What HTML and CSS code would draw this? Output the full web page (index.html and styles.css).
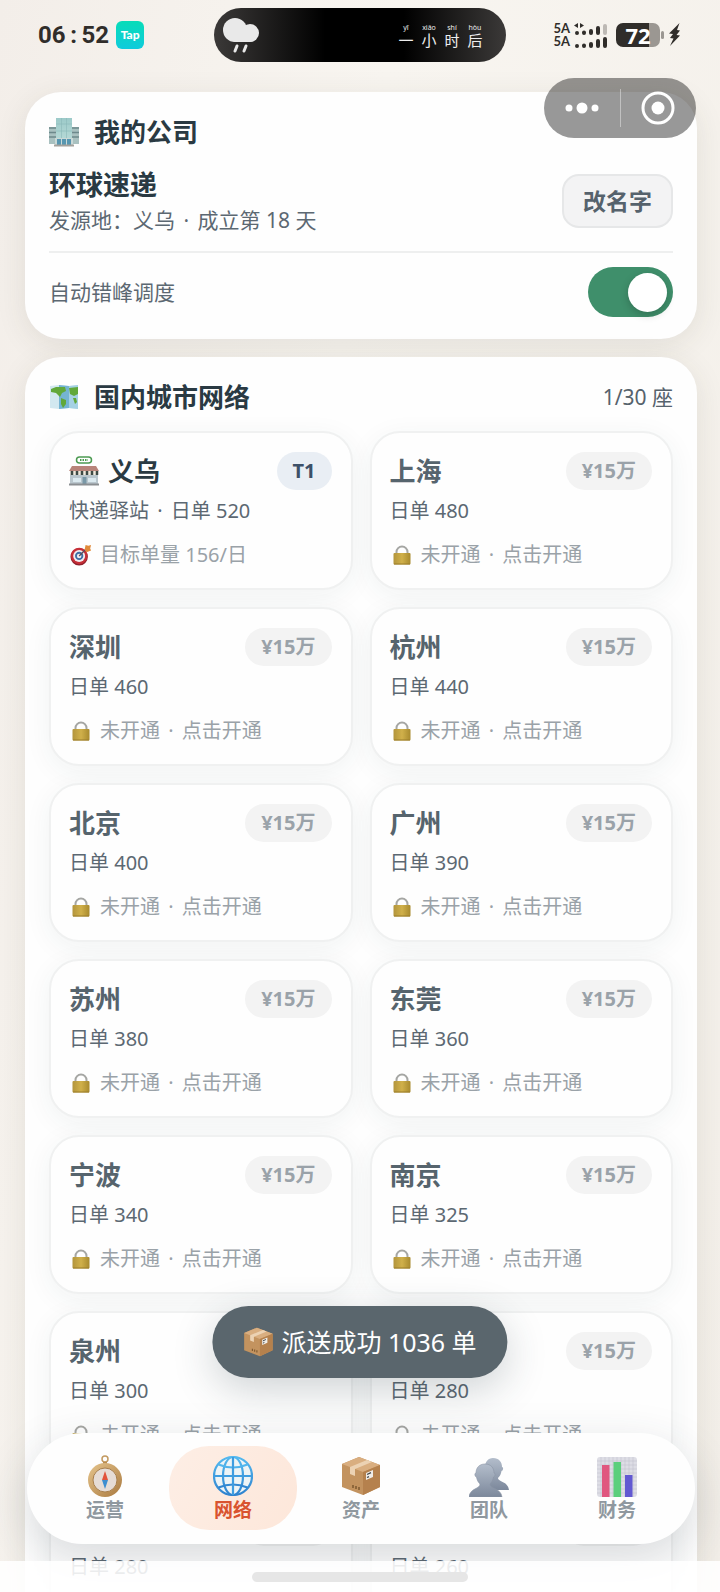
FILE: index.html
```html
<!DOCTYPE html>
<html lang="zh-CN">
<head>
<meta charset="utf-8">
<meta name="viewport" content="width=device-width, initial-scale=1">
<title>环球速递</title>
<link rel="stylesheet" href="styles.css">
</head>
<body>
<svg class="sprite" aria-hidden="true">
  <defs>
    <linearGradient id="gold" x1="0" x2="1"><stop offset="0" stop-color="#b3953c"/><stop offset=".5" stop-color="#d0b04a"/><stop offset="1" stop-color="#a88a2e"/></linearGradient>
    <linearGradient id="brass" x1="0" y1="0" x2="1" y2="1"><stop offset="0" stop-color="#e6c58d"/><stop offset="1" stop-color="#a9793f"/></linearGradient>
    <linearGradient id="sky" x1="0" y1="0" x2="0" y2="1"><stop offset="0" stop-color="#54b9ef"/><stop offset="1" stop-color="#2f83cf"/></linearGradient>
    <linearGradient id="slate" x1="0" y1="0" x2="0" y2="1"><stop offset="0" stop-color="#b3bdcb"/><stop offset="1" stop-color="#7c889b"/></linearGradient>
    <linearGradient id="glass" x1="0" y1="0" x2="0" y2="1"><stop offset="0" stop-color="#9ccac9"/><stop offset="1" stop-color="#b4d8d5"/></linearGradient>
  </defs>
  <symbol id="lock" viewBox="-2 -1 24 22">
    <path d="M4.500 9V7a5.500 5.500 0 0 1 11 0v2" fill="none" stroke="#a5a6a3" stroke-width="2"/>
    <rect x="1.500" y="8" width="17" height="11.500" rx="1" fill="url(#gold)"/>
    <path d="M2 19h16" stroke="#9a7d2a"/>
  </symbol>
  <symbol id="box" viewBox="0 0 40 40">
    <path d="M1 8 18 1l21 8v22L22 39 1 31z" fill="#c3935f"/>
    <path d="M1 8 18 1l21 8-17 7z" fill="#d9ae80"/>
    <path d="M22 16 39 9v22l-17 8z" fill="#b5814d"/>
    <path d="m9 11 17-7 5 2-17 7v7l-5-2z" fill="#ecd2b3"/>
    <path d="m25 17 7-3v7l-7 3z" fill="#f0ede8"/>
    <path d="m26 18.500 4-1.800M26 21.500l2-.9" stroke="#41464b" stroke-width="1.300"/>
    <path d="m12 32 0-3m3 4v-3m3 4v-3" stroke="#7d5930" stroke-width="1.500"/>
  </symbol>
</svg>

<div class="screen">
  <header class="status">
    <div class="clock"><time datetime="06:52"><span>06</span><span class="colon">:</span><span>52</span></time><span class="tap">Tap</span></div>
    <div class="island">
      <svg class="weather" viewBox="0 0 38 36" aria-hidden="true">
        <g fill="#e9e9e9"><circle cx="13" cy="13" r="12"/><circle cx="28" cy="16" r="9"/><rect x="8" y="12" width="26" height="13" rx="6"/></g>
        <path d="m15 29-2 5m11-5-2 5" stroke="#e9e9e9" stroke-width="3" stroke-linecap="round"/>
      </svg>
      <div class="lyric"><span><small>yī</small>一</span><span><small>xiǎo</small>小</span><span><small>shí</small>时</span><span><small>hòu</small>后</span></div>
    </div>
    <div class="device">
      <div class="signals">
        <div class="signal"><span>5A</span><svg viewBox="0 0 34 12" aria-hidden="true"><g stroke="#302d2a" stroke-width="4" stroke-linecap="round"><path d="M4 10h0M11 9.500v.5M18 8v2M25 5v5"/><path d="M32 3v7" stroke="#bdb9b4"/></g><path d="m5 0-4 2.500L5 5zM7 0l4 2.500L7 5z" fill="#302d2a"/></svg></div>
        <div class="signal"><span>5A</span><svg viewBox="0 0 34 12" aria-hidden="true"><g stroke="#302d2a" stroke-width="4" stroke-linecap="round"><path d="M4 10h0M11 9.500v.5M18 8v2M25 5v5M32 3v7"/></g></svg></div>
      </div>
      <div class="battery">72</div>
      <svg class="bolt" viewBox="0 0 12 24" aria-hidden="true"><path d="M10.500 0 0 10.500l4 .5-3 4 3.500.5L1 23 11 12.500 7.500 12l3.500-4.500-3-.5z" fill="#302d2a"/></svg>
    </div>
  </header>

  <div class="capsule">
    <button type="button" aria-label="更多"><svg viewBox="0 0 34 12" aria-hidden="true"><g fill="#fff"><circle cx="4" cy="6" r="3.500"/><circle cx="17" cy="6" r="5.500"/><circle cx="30" cy="6" r="3.500"/></g></svg></button>
    <button type="button" aria-label="关闭"><svg viewBox="0 0 34 34" aria-hidden="true"><circle cx="17" cy="17" r="15" fill="none" stroke="#fff" stroke-width="3"/><circle cx="17" cy="17" r="6.500" fill="#fff"/></svg></button>
  </div>

  <main class="content">
    <section class="panel">
      <div class="panel-head">
        <svg class="head-icon" viewBox="0 0 30 30" aria-hidden="true">
          <path d="M0 10h30v17H0z" fill="#a9c1c0"/>
          <path d="M0 11h30M0 15.500h30M0 20h30" stroke="#6d898b" stroke-width="1.300"/>
          <path d="M7 1h16v20H7z" fill="url(#glass)"/>
          <path d="M12.500 1v20M17.500 1v20M7 7h16M7 14h16" stroke="#8bb9b9" stroke-width=".6"/>
          <path d="M6 21h18v7H6z" fill="#c9d8d6"/><path d="M8 22h4v6H8zM13 22h4v6h-4zM18 22h4v6h-4z" fill="#5796b0"/>
          <path d="M5 28.500h20" stroke="#a3a19c" stroke-width="2"/>
        </svg>
        <h2>我的公司</h2>
      </div>
      <div class="company">
        <div>
          <h3>环球速递</h3>
          <p>发源地：义乌 <span class="dot">·</span> 成立第 18 天</p>
        </div>
        <button type="button" class="rename">改名字</button>
      </div>
      <div class="setting">
        <label for="auto">自动错峰调度</label>
        <input type="checkbox" id="auto" class="switch" role="switch" checked>
      </div>
    </section>

    <section class="panel">
      <div class="panel-head">
        <svg class="head-icon" viewBox="0 0 30 30" aria-hidden="true">
          <path d="m1 4 9-1 10 1 9-1v24l-9-1-10 1-9-1z" fill="#d2e8f0"/>
          <path d="m10 3 10 1v22l-10 1z" fill="#75b4d2"/><path d="m20 4 9-1v24l-9-1z" fill="#a5d1e4"/>
          <path d="m2 7 5-2 9 0 1 4-4 2-2 4-4-4-5-1zM12 16l5 2 0 4-3 4-2-4zM20 6l9-1v7l-4 2-4-2zM24 16l3 0 1 4-2 2z" fill="#61a83a"/>
        </svg>
        <h2>国内城市网络</h2>
        <span class="count">1/30 座</span>
      </div>
      <div class="cities">
        <button type="button" class="city open">
          <span class="city-head"><svg class="shop" viewBox="0 0 30 30" aria-hidden="true"><rect x="7.500" y="1" width="15" height="6" rx="3" fill="#fff" stroke="#4c9a51" stroke-width="1.500"/><path d="M11 4h8" stroke="#4c9a51" stroke-width="2" stroke-dasharray="1.500 1"/><path d="M3 10h24l3 5H0z" fill="#b8847a"/><path d="M1 15h28v13H1z" fill="#b9c6cd"/><path d="M1 15h28v4H1z" fill="#efe9dc"/><path d="M3 15v4m5-4v4m5-4v4m5-4v4m5-4v4m5-4v4" stroke="#3d4a45" stroke-width="2.500"/><path d="M4 22h8v4H4zM19 22h8v4h-8z" fill="#dbe9ef"/><path d="M13.500 21h4v7h-4z" fill="#7998a7"/><path d="M0 28.500h30" stroke="#8b8f92" stroke-width="2"/></svg><strong>义乌</strong><span class="tag">T1</span></span>
          <span class="orders">快递驿站 <span class="dot">·</span> 日单 520</span>
          <span class="hint"><svg viewBox="0 0 24 24" aria-hidden="true"><circle cx="10" cy="14" r="9.500" fill="#8f1f2b"/><circle cx="10" cy="13" r="9" fill="#c62f38"/><circle cx="10" cy="13" r="6.500" fill="#f2ecef"/><circle cx="10" cy="13" r="4.500" fill="#3d6fa6"/><circle cx="10" cy="13" r="2.500" fill="#f2ecef"/><path d="m10 13 8-8" stroke="#5b4b58" stroke-width="1.500"/><path d="m16 6 1-5 3 1 3-1-1 4 1 2-5 2z" fill="#e08a3a"/></svg><span>目标单量 156/日</span></span>
        </button>
        <button type="button" class="city">
          <span class="city-head"><strong>上海</strong><span class="tag">¥15万</span></span>
          <span class="orders">日单 480</span>
          <span class="hint"><svg aria-hidden="true"><use href="#lock"/></svg><span>未开通 <span class="dot">·</span> 点击开通</span></span>
        </button>
        <button type="button" class="city">
          <span class="city-head"><strong>深圳</strong><span class="tag">¥15万</span></span>
          <span class="orders">日单 460</span>
          <span class="hint"><svg aria-hidden="true"><use href="#lock"/></svg><span>未开通 <span class="dot">·</span> 点击开通</span></span>
        </button>
        <button type="button" class="city">
          <span class="city-head"><strong>杭州</strong><span class="tag">¥15万</span></span>
          <span class="orders">日单 440</span>
          <span class="hint"><svg aria-hidden="true"><use href="#lock"/></svg><span>未开通 <span class="dot">·</span> 点击开通</span></span>
        </button>
        <button type="button" class="city">
          <span class="city-head"><strong>北京</strong><span class="tag">¥15万</span></span>
          <span class="orders">日单 400</span>
          <span class="hint"><svg aria-hidden="true"><use href="#lock"/></svg><span>未开通 <span class="dot">·</span> 点击开通</span></span>
        </button>
        <button type="button" class="city">
          <span class="city-head"><strong>广州</strong><span class="tag">¥15万</span></span>
          <span class="orders">日单 390</span>
          <span class="hint"><svg aria-hidden="true"><use href="#lock"/></svg><span>未开通 <span class="dot">·</span> 点击开通</span></span>
        </button>
        <button type="button" class="city">
          <span class="city-head"><strong>苏州</strong><span class="tag">¥15万</span></span>
          <span class="orders">日单 380</span>
          <span class="hint"><svg aria-hidden="true"><use href="#lock"/></svg><span>未开通 <span class="dot">·</span> 点击开通</span></span>
        </button>
        <button type="button" class="city">
          <span class="city-head"><strong>东莞</strong><span class="tag">¥15万</span></span>
          <span class="orders">日单 360</span>
          <span class="hint"><svg aria-hidden="true"><use href="#lock"/></svg><span>未开通 <span class="dot">·</span> 点击开通</span></span>
        </button>
        <button type="button" class="city">
          <span class="city-head"><strong>宁波</strong><span class="tag">¥15万</span></span>
          <span class="orders">日单 340</span>
          <span class="hint"><svg aria-hidden="true"><use href="#lock"/></svg><span>未开通 <span class="dot">·</span> 点击开通</span></span>
        </button>
        <button type="button" class="city">
          <span class="city-head"><strong>南京</strong><span class="tag">¥15万</span></span>
          <span class="orders">日单 325</span>
          <span class="hint"><svg aria-hidden="true"><use href="#lock"/></svg><span>未开通 <span class="dot">·</span> 点击开通</span></span>
        </button>
        <button type="button" class="city">
          <span class="city-head"><strong>泉州</strong></span>
          <span class="orders">日单 300</span>
          <span class="hint"><svg aria-hidden="true"><use href="#lock"/></svg><span>未开通 <span class="dot">·</span> 点击开通</span></span>
        </button>
        <button type="button" class="city">
          <span class="city-head"><span class="tag">¥15万</span></span>
          <span class="orders">日单 280</span>
          <span class="hint"><svg aria-hidden="true"><use href="#lock"/></svg><span>未开通 <span class="dot">·</span> 点击开通</span></span>
        </button>
        <button type="button" class="city">
          <span class="city-head"><span class="tag empty"></span></span>
          <span class="orders">日单 280</span>
        </button>
        <button type="button" class="city">
          <span class="city-head"><span class="tag empty"></span></span>
          <span class="orders">日单 260</span>
        </button>
      </div>
    </section>
  </main>

  <div class="toast" role="status"><svg aria-hidden="true"><use href="#box"/></svg>派送成功 1036 单</div>

  <nav class="tabs">
    <a href="#ops"><svg viewBox="0 0 40 42" aria-hidden="true"><circle cx="20" cy="4" r="3" fill="none" stroke="#c39a61" stroke-width="1.500"/><path d="M18 7h4v3h-4z" fill="#b98c50"/><circle cx="20" cy="25" r="17" fill="url(#brass)"/><circle cx="20" cy="25" r="12" fill="#e6dcd5" stroke="#a9804d"/><path d="m20 16 3 9h-6z" fill="#e2533b"/><path d="m20 34-3-9h6z" fill="#3d8ed0"/></svg>运营</a>
    <a href="#network" class="active" aria-current="page"><svg viewBox="0 0 40 42" aria-hidden="true"><g fill="none" stroke="url(#sky)" stroke-width="2.200"><circle cx="20" cy="21" r="19" fill="#eef4f6"/><ellipse cx="20" cy="21" rx="10" ry="19"/><path d="M5.500 9.500q14.500 6 29 0M5.500 32.500q14.500-6 29 0"/></g><path d="M20 2v38M1 21h38" stroke="#3f9de0" stroke-width="2.200"/></svg>网络</a>
    <a href="#assets"><svg viewBox="0 0 40 40" aria-hidden="true"><use href="#box"/></svg>资产</a>
    <a href="#team"><svg viewBox="0 0 40 42" aria-hidden="true"><g fill="url(#slate)"><path d="M24 3c6 0 9 4 9 9 2 0 1 4-.5 4-.5 3-1.500 5-3.500 7 0 4 10 3 11 12H16V12c0-5 3-9 8-9z"/><path d="M16 9c6 0 9 4 9 9 2 0 1 4-.5 4-.5 3-1.500 5-3.500 7 0 5 11 4 12 13H0c1-9 11-8 11-13-2-2-3-4-3.500-7C6 22 5 18 7 18c0-5 3-9 9-9z" stroke="#8994a5" stroke-width=".6"/></g></svg>团队</a>
    <a href="#finance"><svg viewBox="0 0 40 42" aria-hidden="true"><rect y="2" width="40" height="40" rx="3" fill="#dddde5"/><path d="M4 2v40M8 2v40M12 2v40M16 2v40M20 2v40M24 2v40M28 2v40M32 2v40M36 2v40M0 6h40M0 10h40M0 14h40M0 18h40M0 22h40M0 26h40M0 30h40M0 34h40M0 38h40" stroke="#c2c2cf" stroke-width=".6"/><path d="M5 10h7.500v32H5z" fill="#e0577f"/><path d="M16.500 7H24v35h-7.500z" fill="#5bcf7c"/><path d="M28 20h7.500v22H28z" fill="#6259d2"/></svg>财务</a>
  </nav>
  <div class="home"></div>
</div>
</body>
</html>
```
FILE: styles.css
```css
* {
  box-sizing: border-box;
}

body {
  margin: 0;
  font-family: "Noto Sans", "Noto Sans CJK SC", sans-serif;
  color: #2a3a43;
}

h2, h3, p {
  margin: 0;
}

button {
  font-family: inherit;
  color: inherit;
  cursor: pointer;
}

svg {
  display: block;
  flex: none;
}

.sprite {
  position: absolute;
  width: 0;
  height: 0;
}

.screen {
  position: relative;
  height: 100vh;
  overflow: hidden;
  background: linear-gradient(100deg, #f3eee9, #f8f5f0 40%, #f3efe9);
}

.dot {
  padding: 0 3px;
}

/* Status bar */
.status {
  display: grid;
  grid-template-columns: 1fr 292px 1fr;
  align-items: center;
  height: 92px;
  padding: 8px 39px 30px 38px;
  color: #302d2a;
}

.clock {
  display: flex;
  align-items: center;
  gap: 7px;
}

.clock time {
  display: flex;
  font: bold 24px/32px "Roboto", sans-serif;
}

.colon {
  width: 16px;
  text-align: center;
}

.tap {
  width: 28px;
  border-radius: 6px;
  background: linear-gradient(#08dcb8, #0fcbdc);
  color: #fff;
  font: 900 12px/28px Lato, sans-serif;
  text-align: center;
}

.island {
  display: flex;
  align-items: center;
  justify-content: space-between;
  height: 54px;
  padding: 0 19px 0 8px;
  border-radius: 27px;
  background: linear-gradient(90deg, #3b3938, #000 38%, #000 65%, #3b3938);
  color: #eee;
}

.weather {
  width: 38px;
}

.lyric {
  display: flex;
}

.lyric span {
  display: flex;
  flex-direction: column;
  align-items: center;
  width: 23px;
  font: 15px/16px "Noto Sans CJK SC", sans-serif;
}

.lyric small {
  font: 7px/9px "Noto Sans", sans-serif;
}

.device {
  display: flex;
  align-items: center;
  justify-content: flex-end;
  gap: 9px;
}

.signal {
  display: flex;
  align-items: center;
  gap: 3px;
  font: bold 13px/13px Lato, sans-serif;
}

.signal svg {
  width: 34px;
}

.battery {
  position: relative;
  width: 44px;
  border-radius: 7px;
  background: linear-gradient(90deg, #302d2a 76%, #9b9792 76%);
  color: #fff;
  font: bold 22px/24px "Open Sans", sans-serif;
  text-align: center;
}

.battery::after {
  content: "";
  position: absolute;
  top: 8px;
  right: -4px;
  width: 3px;
  height: 8px;
  border-radius: 2px;
  background: #9b9792;
}

.bolt {
  width: 12px;
}

.capsule {
  position: absolute;
  z-index: 2;
  top: 78px;
  right: 24px;
  display: flex;
  width: 152px;
  height: 60px;
  padding: 11px 0;
  border-radius: 30px;
  background: rgba(0, 0, 0, 0.4);
}

.capsule button {
  display: grid;
  flex: 1;
  place-items: center;
  padding: 0;
  border: 0;
  background: none;
}

.capsule button + button {
  border-left: 1px solid rgba(255, 255, 255, 0.4);
}

.capsule svg {
  width: 34px;
}

/* Panels */
.content {
  display: grid;
  gap: 18px;
  padding: 0 23px 0 25px;
}

.panel {
  min-width: 0;
  padding: 24px 24px 22px;
  border-radius: 36px;
  background: #fefefe;
  box-shadow: 0 6px 30px rgba(60, 60, 40, 0.1);
}

.panel-head {
  display: flex;
  align-items: center;
  gap: 15px;
  margin-bottom: 18px;
}

.panel-head h2 {
  font-size: 26px;
  line-height: 32px;
}

.head-icon {
  width: 30px;
}

.count {
  margin-left: auto;
  color: #56626c;
  font-size: 21px;
  line-height: 32px;
}

.company {
  display: flex;
  align-items: center;
  justify-content: space-between;
  padding-bottom: 15px;
  border-bottom: 2px solid #eeefef;
}

.company h3 {
  font-size: 27px;
  line-height: 38px;
}

.company p,
.setting label {
  color: #5c6872;
  font-size: 21px;
  line-height: 32px;
}

.rename {
  padding: 0 19px;
  border: 2px solid #e6e7e8;
  border-radius: 17px;
  background: #f3f3f4;
  color: #56626c;
  font-size: 23px;
  font-weight: bold;
  line-height: 50px;
}

.setting {
  display: flex;
  align-items: center;
  justify-content: space-between;
  padding-top: 14px;
}

.switch {
  display: flex;
  align-items: center;
  width: 85px;
  height: 50px;
  margin: 0;
  padding: 0 6px;
  border-radius: 25px;
  background: #c9cdd0;
  appearance: none;
}

.switch::before {
  content: "";
  width: 39px;
  height: 39px;
  border-radius: 50%;
  background: #fff;
  box-shadow: 0 3px 8px rgba(0, 0, 0, 0.2);
}

.switch:checked {
  justify-content: flex-end;
  background: #3f8f6b;
}

/* City cards */
.cities {
  display: grid;
  grid-template-columns: 1fr 1fr;
  gap: 17px;
}

.city {
  display: flex;
  flex-direction: column;
  min-width: 0;
  padding: 19px 19px 19px 18px;
  border: 2px solid #f0f1f1;
  border-radius: 30px;
  background: #fefefe;
  box-shadow: 0 6px 28px rgba(40, 60, 60, 0.06);
  color: #56646d;
  text-align: left;
}

.city.open {
  color: #2a3a43;
}

.city-head {
  display: flex;
  align-items: center;
  gap: 9px;
  height: 38px;
  margin-bottom: 7px;
}

.city-head strong {
  font-size: 26px;
  line-height: 36px;
}

.shop {
  width: 30px;
}

.tag {
  margin-left: auto;
  padding: 0 16px;
  border-radius: 19px;
  background: #f3f3f3;
  color: #9aa2a9;
  font-size: 20px;
  font-weight: bold;
  line-height: 38px;
}

.tag.empty {
  width: 87px;
  height: 38px;
}

.open .tag {
  background: #e9eef4;
  color: #3d5068;
}

.orders {
  margin-bottom: 16px;
  color: #5c6872;
  font-size: 20px;
  line-height: 28px;
}

.hint {
  display: flex;
  align-items: center;
  gap: 7px;
  color: #9aa2a8;
  font-size: 20px;
  line-height: 28px;
}

.hint svg {
  width: 24px;
  height: 22px;
}

/* Overlays */
.toast {
  position: absolute;
  z-index: 2;
  bottom: 214px;
  left: 50%;
  display: flex;
  align-items: center;
  gap: 8px;
  padding: 0 31px;
  border-radius: 36px;
  background: #5a666d;
  box-shadow: 0 12px 40px rgba(42, 58, 67, 0.22);
  color: #fff;
  font-size: 25px;
  line-height: 72px;
  white-space: nowrap;
  transform: translateX(-50%);
}

.toast svg {
  width: 30px;
  height: 30px;
}

.tabs {
  position: absolute;
  z-index: 1;
  right: 25px;
  bottom: 48px;
  left: 27px;
  display: grid;
  grid-template-columns: repeat(5, 1fr);
  padding: 13px 14px 14px;
  border-radius: 56px;
  background: #fefefe;
  box-shadow: 0 16px 48px rgba(42, 58, 67, 0.18);
}

.tabs a {
  display: flex;
  flex-direction: column;
  align-items: center;
  height: 84px;
  padding-top: 9px;
  border-radius: 40px;
  color: #8f989f;
  font-size: 19px;
  font-weight: bold;
  line-height: 26px;
  text-decoration: none;
}

.tabs svg {
  width: 40px;
  height: 42px;
}

.tabs .active {
  background: linear-gradient(120deg, #fdeee5, #fde7da);
  color: #d9532f;
}

.home {
  position: absolute;
  z-index: 3;
  right: 0;
  bottom: 0;
  left: 0;
  display: flex;
  justify-content: center;
  padding: 11px 10px 10px;
  background: rgba(255, 255, 255, 0.88);
}

.home::before {
  content: "";
  width: 216px;
  height: 10px;
  border-radius: 5px;
  background: #e6e6e6;
}
```
